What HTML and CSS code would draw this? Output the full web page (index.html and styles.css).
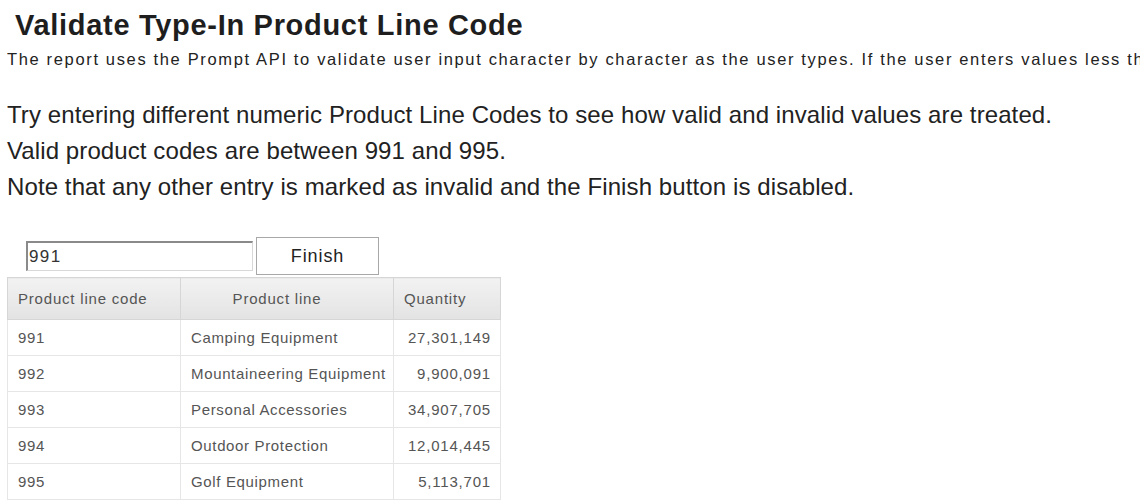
FILE: index.html
```html
<!DOCTYPE html>
<html>
<head>
<meta charset="utf-8">
<link rel="stylesheet" href="styles.css">
</head>
<body>
<div class="page">
  <h1 class="title">Validate Type-In Product Line Code</h1>
  <p class="intro">The report uses the Prompt API to validate user input character by character as the user types. If the user enters values less than 991 or greater than 995, the input is flagged as invalid.</p>
  <div class="notes">
    <p>Try entering different numeric Product Line Codes to see how valid and invalid values are treated.</p>
    <p>Valid product codes are between 991 and 995.</p>
    <p>Note that any other entry is marked as invalid and the Finish button is disabled.</p>
  </div>
  <div class="prompt">
    <input class="code-input" type="text" value="991">
    <button class="finish">Finish</button>
  </div>
  <table class="data">
    <thead>
      <tr><th class="c1">Product line code</th><th class="c2">Product line</th><th class="c3">Quantity</th></tr>
    </thead>
    <tbody>
      <tr><td>991</td><td>Camping Equipment</td><td class="num">27,301,149</td></tr>
      <tr><td>992</td><td>Mountaineering Equipment</td><td class="num">9,900,091</td></tr>
      <tr><td>993</td><td>Personal Accessories</td><td class="num">34,907,705</td></tr>
      <tr><td>994</td><td>Outdoor Protection</td><td class="num">12,014,445</td></tr>
      <tr><td>995</td><td>Golf Equipment</td><td class="num">5,113,701</td></tr>
    </tbody>
  </table>
</div>
</body>
</html>
```
FILE: styles.css
```css
html, body {
  margin: 0;
  padding: 0;
  background: #ffffff;
}
body {
  font-family: "Liberation Sans", Arial, sans-serif;
  color: #222;
  overflow: hidden;
  width: 1140px;
  height: 503px;
}
.page {
  padding: 0 0 0 7px;
}
.title {
  margin: 0;
  padding: 9px 0 0 8px;
  font-size: 29px;
  line-height: 32px;
  letter-spacing: 0.7px;
  font-weight: bold;
  color: #1e1e1e;
}
.intro {
  margin: 9px 0 0 0;
  font-size: 16.5px;
  line-height: 18px;
  letter-spacing: 1.65px;
  white-space: nowrap;
  overflow: hidden;
  color: #222;
}
.notes {
  margin-top: 29px;
}
.notes p {
  margin: 0;
  font-size: 24px;
  line-height: 36px;
  letter-spacing: 0.1px;
  color: #222;
  white-space: nowrap;
}
.prompt {
  display: flex;
  align-items: center;
  margin-top: 32px;
  padding-left: 19px;
  height: 38px;
}
.code-input {
  box-sizing: border-box;
  width: 227px;
  height: 30px;
  margin: 0 3px 0 0;
  padding: 0 0 0 1px;
  font-family: "Liberation Sans", Arial, sans-serif;
  font-size: 17px;
  letter-spacing: 1.4px;
  color: #333;
  border-style: solid;
  border-width: 2px 1px 1px 2px;
  border-color: #8a8a8a #d8d8d8 #d8d8d8 #8a8a8a;
  background: #fff;
  outline: none;
}
.finish {
  box-sizing: border-box;
  width: 123px;
  height: 38px;
  font-family: "Liberation Sans", Arial, sans-serif;
  font-size: 18px;
  letter-spacing: 0.9px;
  color: #222;
  background: #fff;
  border: 1px solid #a8a8a8;
  padding: 0;
}
.data {
  margin-top: 2px;
  border-collapse: collapse;
  font-size: 15px;
  letter-spacing: 0.8px;
  color: #555;
  border: 1px solid #ddd;
  table-layout: fixed;
  width: 493px;
}
.data th {
  height: 42px;
  box-sizing: border-box;
  font-weight: normal;
  background: linear-gradient(#f2f2f2, #e3e3e3);
  border: 1px solid #d6d6d6;
  padding: 0 10px;
  color: #555;
  white-space: nowrap;
}
.data th.c1 { width: 173px; text-align: left; }
.data th.c2 { width: 213px; text-align: center; padding: 0 20px 0 0; }
.data th.c3 { width: 107px; text-align: left; }
.data td {
  height: 36px;
  box-sizing: border-box;
  border: 1px solid #e6e6e6;
  padding: 0 10px;
  white-space: nowrap;
  letter-spacing: 0.65px;
}
.data td.num {
  text-align: right;
  padding-right: 9px;
  letter-spacing: 0.8px;
}
```
